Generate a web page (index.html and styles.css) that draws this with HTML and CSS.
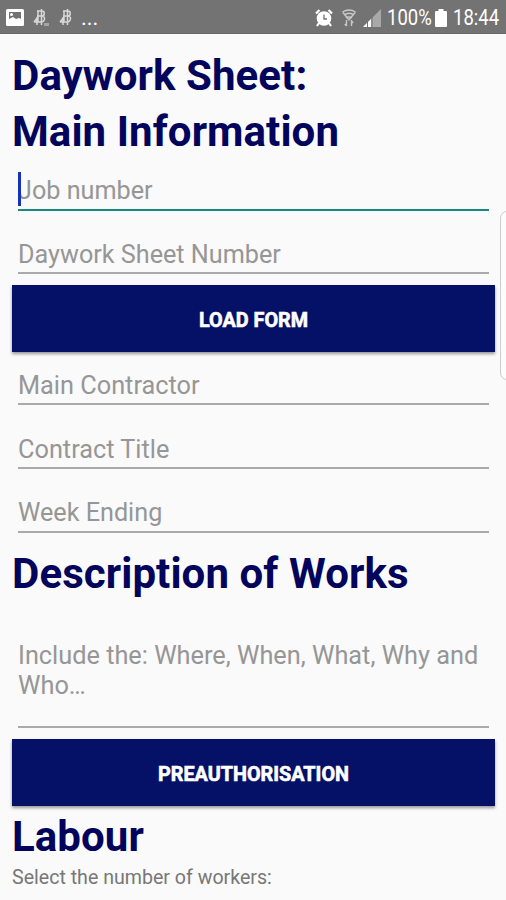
FILE: index.html
```
<!DOCTYPE html>
<html lang="en">
<head>
<meta charset="utf-8">
<title>Daywork Sheet</title>
<link rel="stylesheet" href="styles.css">
</head>
<body>
<header class="status">
  <div class="status-left">
    <svg class="picture" width="18" height="17" viewBox="0 0 18 17"><rect width="18" height="17" rx="1.5" fill="#fff"/><path d="M3 3h12v10H3z" fill="#737373"/><path d="M3 10l4-2 3 2 3-1 2 1v3H3z" fill="#fff"/><circle cx="5.500" cy="5.500" r="1.500" fill="#fff"/></svg>
    <svg class="app-a" width="18" height="18" viewBox="0 0 18 18" fill="none" stroke="#d8d8d8" stroke-width="1.500"><path d="M4 2h5c3 0 3 5 0 5H4M9 7c4 0 3 6-1 6H1M5 2v11M8.500 0v16M1 13l4-5M4 8v8"/><path d="M11 15.500h5" stroke="#a5a5a5" stroke-width="3"/></svg>
    <svg class="app-b" width="14" height="18" viewBox="0 0 14 18" fill="none" stroke="#d8d8d8" stroke-width="1.500"><path d="M4 2h5c3 0 3 5 0 5H4M9 7c4 0 3 6-1 6H1M5 2v11M8.500 0v16M1 13l4-5M4 8v8"/></svg>
    <span class="more">...</span>
  </div>
  <div class="status-right">
    <svg class="alarm" width="18" height="18" viewBox="0 0 18 18"><circle cx="9" cy="9.500" r="7.300" fill="#fff"/><path d="M1 4.500L4.500 1M17 4.500L13.500 1M4 14l-2 3M14 14l2 3" stroke="#fff" stroke-width="2.200"/><path d="M9 5.500v4.500h3" fill="none" stroke="#737373" stroke-width="1.300"/></svg>
    <svg class="wifi" width="16" height="18" viewBox="0 0 16 18" fill="none" stroke="#c8c8c8" stroke-width="1.400"><path d="M1.500 3q6.500-4 13 0M3 6q5-3.500 10 0M5 9q3-2 6 0M1.500 3L8 11l6.500-8"/><path d="M5.500 11v6M3.800 15l1.700 2M10.500 17v-6M10.500 12l1.700 2"/></svg>
    <svg class="signal" width="18" height="18" viewBox="0 0 18 18"><path d="M0 18L18 0v18z" fill="#a8a8a8"/><path d="M0 18l8-8v8z" fill="#fff"/><path d="M4.500 12v6M9 8v10" stroke="#737373" stroke-width="1"/></svg>
    <span class="percent">100%</span>
    <svg class="battery" width="12" height="18" viewBox="0 0 12 18"><path d="M3.500 0h5v2H11q1 0 1 1v14q0 1-1 1H1q-1 0-1-1V3q0-1 1-1h2.500z" fill="#fff"/></svg>
    <time class="clock">18:44</time>
  </div>
</header>
<main class="form">
  <h1 class="heading main-heading">Daywork Sheet:<br>Main Information</h1>
  <div class="field focused"><i class="caret"></i>Job number</div>
  <div class="field sheet-number">Daywork Sheet Number</div>
  <button class="button load">LOAD FORM</button>
  <div class="field contractor">Main Contractor</div>
  <div class="field title">Contract Title</div>
  <div class="field">Week Ending</div>
  <h2 class="heading works">Description of Works</h2>
  <div class="field description">Include the: Where, When, What, Why and Who…</div>
  <button class="button pre">PREAUTHORISATION</button>
  <h2 class="heading labour">Labour</h2>
  <p class="hint">Select the number of workers:</p>
</main>
<div class="edge-handle"></div>
</body>
</html>
```
FILE: styles.css
```
* { box-sizing: border-box; }
body {
  margin: 0;
  height: 900px;
  overflow: hidden;
  position: relative;
  background: #fafafa;
  font-family: Roboto, sans-serif;
}
.status {
  height: 34px;
  padding: 2px 6px 0;
  display: flex;
  justify-content: space-between;
  background: #737373;
  border-bottom: 1px solid #686868;
  color: #fff;
}
.status-left, .status-right { display: flex; align-items: center; }
.status svg { flex: none; }
.app-a { margin-left: 9px; }
.app-b { margin-left: 8px; }
.more { margin-left: 8px; font-size: 22px; line-height: 31px; }
.wifi { margin-left: 8px; }
.signal { margin-left: 6px; }
.percent {
  margin-left: 6px;
  width: 45px;
  font-size: 21.5px;
  white-space: nowrap;
}
.percent, .clock {
  line-height: 33px;
  transform: scaleX(.86);
  transform-origin: left;
}
.battery { margin-left: 3px; }
.clock { margin-left: 6px; width: 47px; font-size: 21.5px; }
.form { padding: 14px 11px 0 12px; }
.heading {
  margin: 0;
  color: #03045c;
  font-size: 42px;
  line-height: 56px;
  letter-spacing: .08px;
  font-weight: 700;
}
.field {
  position: relative;
  height: 64px;
  margin: 0 6px;
  padding-top: 29px;
  border-bottom: 2px solid #aaa;
  color: #969696;
  font-size: 25.2px;
  line-height: 30px;
  white-space: nowrap;
}
.focused { height: 51px; padding-top: 16px; border-color: #178a7b; }
.sheet-number { height: 63px; }
.caret {
  position: absolute;
  left: 0;
  top: 12px;
  width: 3px;
  height: 34px;
  background: #1433b8;
}
.button {
  display: block;
  width: 483px;
  height: 67px;
  padding: 5px 0 0;
  border: 0;
  background: #041166;
  box-shadow: 0 2px 3px #0006;
  color: #fff;
  font: 700 19.8px/24px Roboto, sans-serif;
  -webkit-text-stroke: .6px #fff;
}
.load { margin-top: 11px; }
.contractor { height: 53px; padding-top: 19px; font-size: 25.3px; }
.title { padding-top: 30px; font-size: 25.3px; }
.works { margin-top: 13px; }
.description { height: 126px; padding-top: 39px; font-size: 25.3px; white-space: normal; }
.pre { margin-top: 11px; }
.labour { margin-top: 3px; }
.hint { margin: 1px 0 0; color: #777; font-size: 19.6px; line-height: 24px; }
.edge-handle {
  position: absolute;
  right: -8px;
  top: 211px;
  width: 14px;
  height: 169px;
  border: 1px solid #ccc;
  border-radius: 8px;
  background: #fcfcfc;
}
```
